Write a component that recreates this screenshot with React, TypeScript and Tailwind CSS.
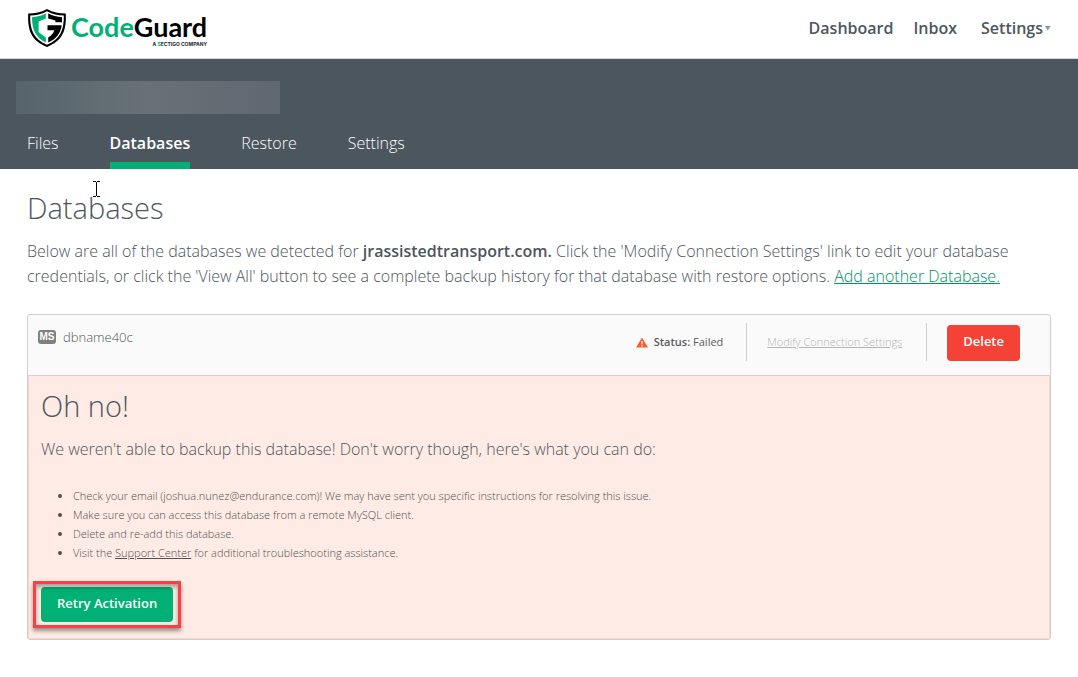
const topLinks = ["Dashboard", "Inbox"];

const tabs = [
  { label: "Files", active: false },
  { label: "Databases", active: true },
  { label: "Restore", active: false },
  { label: "Settings", active: false },
];

function Logo() {
  return (
    <a href="#" className="flex items-center gap-1" aria-label="CodeGuard home">
      <svg width="40" height="40" viewBox="0 0 40 40" aria-hidden="true">
        <path
          d="M20 1C14 4.400 8 5.500 1.200 5.500C.5 22 4 32.500 20 39C36 32.500 39.500 22 38.800 5.500C32 5.500 26 4.400 20 1Z"
          fill="#000"
        />
        <path
          d="M20 3.200C14.500 6.200 9 7.300 3.200 7.400C2.900 21.500 6.500 30.800 20 36.800C33.500 30.800 37.100 21.500 36.800 7.400C31 7.300 25.500 6.200 20 3.200Z"
          fill="#fff"
        />
        <path
          d="M18.800 5.500V10.500L11.600 13.400V24L18.800 29.400V34.500C8 29 5.200 21.500 5 9.200C10 8.900 14.500 7.700 18.800 5.500Z"
          fill="#00b074"
        />
        <path
          d="M21.200 5.500C25.500 7.700 30 8.900 35 9.200V14.300H28.400V12.400L21.200 10.500ZM20.500 17.300H34.700C33.600 25.300 29.400 31 21.200 34.500V29.400C24.400 27.700 26.400 25.300 27.300 22.300H20.500Z"
          fill="#000"
        />
      </svg>
      <span className="flex flex-col items-end pt-1 font-[Lato,sans-serif] text-[27px] leading-[28px] font-bold text-black">
        <span>
          <span className="text-[#00b074]">Code</span>Guard
        </span>
        <span className="font-[Inter,sans-serif] text-[5px] leading-[6px] font-bold whitespace-nowrap text-[#1b2733]">
          A <span className="text-[#00b074]">S</span>ECTIGO COMPANY
        </span>
      </span>
    </a>
  );
}

function TopBar() {
  return (
    <header className="flex h-[59px] items-center justify-between border-b border-[#d4d4d4] px-[27px] pb-[2px]">
      <Logo />
      <nav className="flex items-center text-[16px] leading-6 font-semibold text-[#4c565e]">
        {topLinks.map((label) => (
          <a key={label} href="#" className="mr-5">
            {label}
          </a>
        ))}
        <button type="button" className="ml-1 flex items-center gap-px">
          Settings
          <svg width="7" height="6" viewBox="0 0 7 6" aria-hidden="true">
            <path d="M1 1H6.500L3.750 5.500Z" fill="#909090" />
          </svg>
        </button>
      </nav>
    </header>
  );
}

function SiteBar() {
  return (
    <div className="bg-[#4c565e] pt-[22px]">
      <div className="ml-4 h-[33px] w-[264px] bg-linear-to-r from-[#56646b] via-[#687178] to-[#5f6770]" />
      <nav className="flex gap-[51px] px-[27px] pt-[17px] text-[16px] leading-6 text-white">
        {tabs.map((tab) => (
          <a
            key={tab.label}
            href="#"
            className={
              tab.active
                ? "border-b-[7px] border-[#00b074] pb-[7px] font-semibold"
                : "border-b-[7px] border-transparent pb-[7px] font-light"
            }
          >
            {tab.label}
          </a>
        ))}
      </nav>
    </div>
  );
}

function DatabaseCard() {
  return (
    <section className="mt-[25px] rounded-[3px] border border-[#cfcfcf] bg-[#fafafa]">
      <div className="flex h-[60px] items-start justify-between pt-2 pr-[30px] pl-[10px]">
        <div className="flex items-center gap-[7px] pt-1 text-[13px] leading-5 font-light text-[#4c565e]">
          <span className="flex h-[14px] w-[18px] items-center justify-center rounded-[3px] bg-[#808080] font-['Liberation_Sans',sans-serif] text-[10px] leading-none font-bold text-white">
            MS
          </span>
          dbname40c
        </div>
        <div className="flex items-center text-[11px]">
          <div className="flex items-center gap-[6px] pr-[23px] text-[#5a5a5a]">
            <svg width="12" height="11" viewBox="0 0 12 11" aria-hidden="true">
              <path d="M6 0.500L12 10.500H0Z" fill="#f4602f" />
              <path d="M5.300 4H6.700L6.400 7.500H5.600ZM5.400 8.200H6.600V9.400H5.400Z" fill="#fff" />
            </svg>
            <p>
              <b className="font-semibold">Status:</b> Failed
            </p>
          </div>
          <div className="flex h-[38px] items-center border-x border-[#cfcfcf] pr-6 pl-5">
            <a href="#" className="font-light text-[#b4b4b4] underline">
              Modify Connection Settings
            </a>
          </div>
          <button
            type="button"
            className="ml-5 h-9 self-end rounded-[4px] bg-[#f44336] px-4 pb-[2px] text-[13px] font-semibold text-white"
          >
            Delete
          </button>
        </div>
      </div>
      <div className="border border-t-[#cfcfcf] border-r-[#f9d5c8] border-b-[#f9d5c8] border-l-[#f9d5c8] bg-[#ffebe5] px-3 pt-[9px] pb-4 text-[#4c565e]">
        <h2 className="text-[29px] leading-[42px] font-light">Oh no!</h2>
        <p className="mt-[10px] text-[16px] leading-6 font-light">
          We weren't able to backup this database! Don't worry though, here's what you can do:
        </p>
        <ul className="mt-[25px] list-disc pl-8 text-[11px] leading-[19px] font-light text-[#505050]">
          <li>
            Check your email (joshua.nunez@endurance.com)! We may have sent you specific instructions for
            resolving this issue.
          </li>
          <li>Make sure you can access this database from a remote MySQL client.</li>
          <li>Delete and re-add this database.</li>
          <li>
            Visit the{" "}
            <a href="#" className="underline">
              Support Center
            </a>{" "}
            for additional troubleshooting assistance.
          </li>
        </ul>
        <div className="relative mt-[25px] w-fit">
          <button
            type="button"
            className="block h-[35px] rounded-[4px] bg-[#00b074] px-4 pb-[2px] text-[13px] font-semibold text-white"
          >
            Retry Activation
          </button>
          <span className="pointer-events-none absolute -inset-x-2 -inset-y-[6px] border-[3px] border-[#f94144] shadow-[0_3px_4px_rgba(0,0,0,0.4),inset_0_3px_4px_rgba(0,0,0,0.35)]" />
        </div>
      </div>
    </section>
  );
}

export default function App() {
  return (
    <div className="min-h-screen bg-white font-['Open_Sans',sans-serif]">
      <TopBar />
      <SiteBar />
      <main className="relative px-[27px] pt-[18px] pb-9 text-[#4c565e]">
        <svg
          className="pointer-events-none absolute top-3 left-[93px]"
          width="7"
          height="16"
          viewBox="0 0 7 16"
          shapeRendering="crispEdges"
          aria-hidden="true"
        >
          <path d="M0 0H3V1H0ZM4 0H7V1H4ZM3 1H4V15H3ZM0 15H3V16H0ZM4 15H7V16H4Z" fill="#000" />
        </svg>
        <h1 className="text-[29px] leading-[42px] font-light">Databases</h1>
        <p className="mt-[10px] text-[16px] leading-[25px] font-light">
          Below are all of the databases we detected for{" "}
          <b className="font-semibold">jrassistedtransport.com.</b> Click the 'Modify Connection Settings' link to
          edit your database credentials, or click the 'View All' button to see a complete backup history for that
          database with restore options.{" "}
          <a href="#" className="text-[#00935f] underline">
            Add another Database.
          </a>
        </p>
        <DatabaseCard />
      </main>
    </div>
  );
}
